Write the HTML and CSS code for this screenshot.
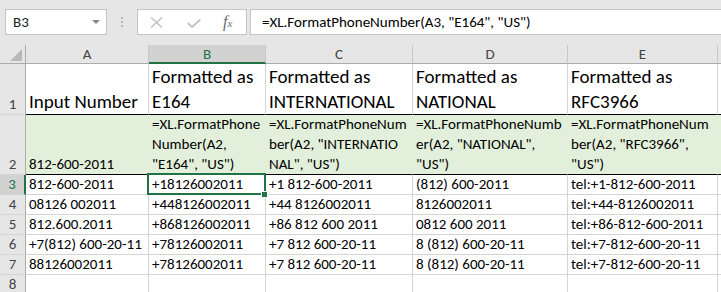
FILE: index.html
```html
<!DOCTYPE html>
<html lang="en">
<head>
    <meta charset="UTF-8">
    <title>FormatPhoneNumber</title>
    <link rel="stylesheet" href="styles.css">
</head>
<body>

<div class="app">
    <div class="formula-bar">
        <div class="name-box">
            <span>B3</span>
            <span class="caret"></span>
        </div>
        <div class="grip"><i></i><i></i><i></i></div>
        <div class="fx-buttons">
            <svg class="icon" width="13" height="11" viewBox="0 0 13 11">
                <path d="M1 0.5 L12 10.5 M12 0.5 L1 10.5" stroke="#c3c3c3" stroke-width="1.6" fill="none"/>
            </svg>
            <svg class="icon" width="14" height="9" viewBox="0 0 14 9">
                <path d="M0.8 4 L5 8 L13.3 0.6" stroke="#c3c3c3" stroke-width="2" fill="none"/>
            </svg>
            <span class="fx">f<small>x</small></span>
        </div>
        <div class="formula-input">=XL.FormatPhoneNumber(A3, "E164", "US")</div>
    </div>

    <div class="sheet">
        <!-- column headers -->
        <div class="corner"><span class="tri"></span></div>
        <div class="col-head">A</div>
        <div class="col-head active">B</div>
        <div class="col-head">C</div>
        <div class="col-head">D</div>
        <div class="col-head">E</div>
        <div class="col-head"></div>

        <!-- row 1 -->
        <div class="row-head">1</div>
        <div class="cell title">Input Number</div>
        <div class="cell title">Formatted as<br>E164</div>
        <div class="cell title">Formatted as<br>INTERNATIONAL</div>
        <div class="cell title">Formatted as<br>NATIONAL</div>
        <div class="cell title">Formatted as<br>RFC3966</div>
        <div class="cell title"></div>

        <!-- row 2 -->
        <div class="row-head">2</div>
        <div class="cell formula">812-600-2011</div>
        <div class="cell formula">=XL.FormatPhone<br>Number(A2,<br>"E164", "US")</div>
        <div class="cell formula">=XL.FormatPhoneNum<br>ber(A2, "INTERNATIO<br>NAL", "US")</div>
        <div class="cell formula">=XL.FormatPhoneNumb<br>er(A2, "NATIONAL",<br>"US")</div>
        <div class="cell formula">=XL.FormatPhoneNum<br>ber(A2, "RFC3966",<br>"US")</div>
        <div class="cell formula"></div>

        <!-- row 3 -->
        <div class="row-head active">3</div>
        <div class="cell">812-600-2011</div>
        <div class="cell">+18126002011</div>
        <div class="cell">+1 812-600-2011</div>
        <div class="cell">(812) 600-2011</div>
        <div class="cell">tel:+1-812-600-2011</div>
        <div class="cell"></div>

        <!-- row 4 -->
        <div class="row-head">4</div>
        <div class="cell">08126 002011</div>
        <div class="cell">+448126002011</div>
        <div class="cell">+44 8126002011</div>
        <div class="cell">8126002011</div>
        <div class="cell">tel:+44-8126002011</div>
        <div class="cell"></div>

        <!-- row 5 -->
        <div class="row-head">5</div>
        <div class="cell">812.600.2011</div>
        <div class="cell">+868126002011</div>
        <div class="cell">+86 812 600 2011</div>
        <div class="cell">0812 600 2011</div>
        <div class="cell">tel:+86-812-600-2011</div>
        <div class="cell"></div>

        <!-- row 6 -->
        <div class="row-head">6</div>
        <div class="cell">+7(812) 600-20-11</div>
        <div class="cell">+78126002011</div>
        <div class="cell">+7 812 600-20-11</div>
        <div class="cell">8 (812) 600-20-11</div>
        <div class="cell">tel:+7-812-600-20-11</div>
        <div class="cell"></div>

        <!-- row 7 -->
        <div class="row-head">7</div>
        <div class="cell">88126002011</div>
        <div class="cell">+78126002011</div>
        <div class="cell">+7 812 600-20-11</div>
        <div class="cell">8 (812) 600-20-11</div>
        <div class="cell">tel:+7-812-600-20-11</div>
        <div class="cell"></div>

        <!-- row 8 -->
        <div class="row-head">8</div>
        <div class="cell"></div>
        <div class="cell"></div>
        <div class="cell"></div>
        <div class="cell"></div>
        <div class="cell"></div>
        <div class="cell"></div>

        <div class="selection"><span class="handle"></span></div>
    </div>
</div>

</body>
</html>
```

FILE: styles.css
```css
/* Sheet look */
body {
    margin: 0;
    background: #ffffff;
    font-family: Carlito, Calibri, Lato, sans-serif;
    color: #000;
    overflow: hidden;
}

.app {
    width: 721px;
    height: 292px;
    overflow: hidden;
}

/* formula bar */
.formula-bar {
    height: 45px;
    background: #e6e6e6;
    display: flex;
    align-items: flex-start;
    padding: 9px 0 0 5px;
    box-sizing: border-box;
}

.name-box {
    width: 102px;
    height: 26px;
    box-sizing: border-box;
    background: #fff;
    border: 1px solid #c6c6c6;
    display: flex;
    align-items: center;
    justify-content: space-between;
    padding: 0 6px 0 7px;
    font-size: 15px;
    color: #222;
}

.caret {
    width: 0;
    height: 0;
    border-left: 4px solid transparent;
    border-right: 4px solid transparent;
    border-top: 4px solid #8a8a8a;
}

.grip {
    width: 2px;
    margin: 8px 14px 0 14px;
    display: flex;
    flex-direction: column;
    gap: 2px;
}

.grip i {
    width: 2px;
    height: 2px;
    background: #b5b5b5;
}

.fx-buttons {
    width: 110px;
    height: 26px;
    box-sizing: border-box;
    background: #fff;
    border: 1px solid #c6c6c6;
    display: flex;
    align-items: center;
    padding: 0 0 0 12px;
}

.fx-buttons .icon:first-child {
    margin-right: 24px;
}

.fx-buttons .icon:nth-child(2) {
    margin-top: 2px;
    margin-right: 22px;
}

.fx {
    font-family: "Liberation Serif", serif;
    font-style: italic;
    font-size: 16px;
    color: #6b6b6b;
    margin-top: -1px;
}

.fx small {
    font-size: 11px;
}

.formula-input {
    flex: 1;
    margin-left: 3px;
    height: 26px;
    box-sizing: border-box;
    background: #fff;
    border: 1px solid #c6c6c6;
    border-right: none;
    padding-left: 11px;
    font-size: 15px;
    line-height: 24px;
    white-space: nowrap;
}

/* grid */
.sheet {
    position: relative;
    display: grid;
    grid-template-columns: 26px 123px 117px 147px 155px 150px 1fr;
    grid-template-rows: 19px 51px 60px repeat(6, 20px);
}

.corner,
.col-head,
.row-head {
    background: #e6e6e6;
    color: #444;
    font-size: 15px;
    box-sizing: border-box;
}

.corner {
    position: relative;
    border-right: 1px solid #ababab;
    border-bottom: 1px solid #ababab;
}

.tri {
    position: absolute;
    right: 3px;
    bottom: 2px;
    width: 0;
    height: 0;
    border-left: 12px solid transparent;
    border-bottom: 12px solid #b9b9b9;
}

.col-head {
    border-right: 1px solid #c8c8c8;
    border-bottom: 1px solid #ababab;
    text-align: center;
    line-height: 19px;
}

.col-head.active {
    background: #d2d2d2;
    color: #217346;
    border-bottom: 2px solid #217346;
}

.row-head {
    border-right: 1px solid #ababab;
    border-bottom: 1px solid #d4d4d4;
    display: flex;
    align-items: flex-end;
    justify-content: center;
    line-height: 20px;
}

.row-head.active {
    background: #d2d2d2;
    color: #217346;
    border-right: 2px solid #217346;
}

.cell {
    border-right: 1px solid #d4d4d4;
    border-bottom: 1px solid #d4d4d4;
    box-sizing: border-box;
    font-size: 15px;
    line-height: 20px;
    padding: 0 3px 0 3px;
    white-space: nowrap;
    overflow: hidden;
    display: flex;
    align-items: flex-end;
}

.cell.title {
    font-size: 19px;
    line-height: 25px;
    border-bottom-color: #000;
}

.cell.formula {
    background: #e2efda;
    border-right-color: #e2efda;
    border-bottom-color: #000;
}

/* active cell */
.selection {
    position: absolute;
    left: 147px;
    top: 128px;
    width: 119px;
    height: 22px;
    box-sizing: border-box;
    border: 2px solid #217346;
}

.handle {
    position: absolute;
    right: -4px;
    bottom: -5px;
    width: 5px;
    height: 5px;
    background: #217346;
    border: 1px solid #fff;
}
```
